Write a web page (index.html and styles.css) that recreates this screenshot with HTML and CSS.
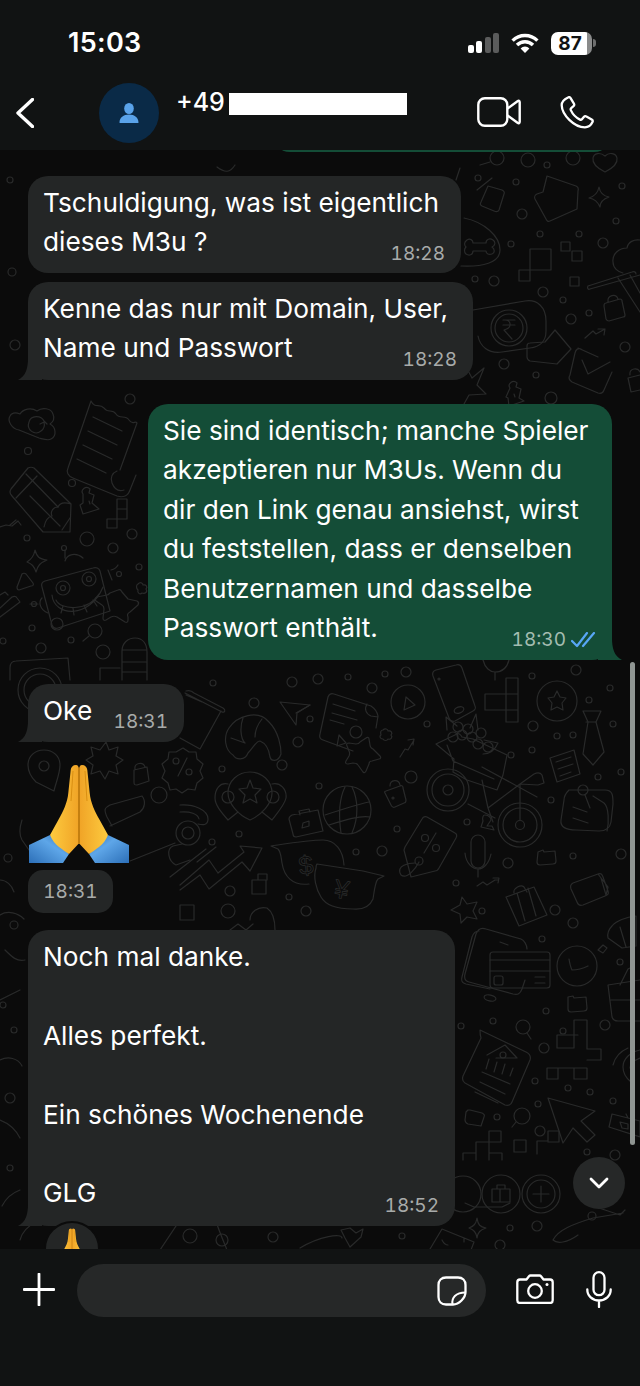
FILE: index.html
```html
<!DOCTYPE html>
<html lang="de">
<head>
  <meta charset="UTF-8">
  <title>WhatsApp Chat</title>
  <link rel="stylesheet" href="styles.css">
</head>
<body>
  <div class="phone">
    <header class="topbar">
      <div class="status">
        <span class="clock">15:03</span>
        <div class="status-icons">
          <div class="signal">
            <i class="bar b1"></i><i class="bar b2"></i><i class="bar b3"></i><i class="bar b4"></i>
          </div>
          <svg class="wifi" viewBox="0 0 28 20" width="28" height="20">
            <path d="M1.6 7.6a17.5 17.5 0 0 1 24.8 0M6 12a11.3 11.3 0 0 1 16 0" fill="none" stroke="#fff" stroke-width="3.4"/>
            <path d="M14 20l-4.4-4.6a6.2 6.2 0 0 1 8.8 0z" fill="#fff"/>
          </svg>
          <div class="battery"><span class="battery-level">87</span></div>
          <i class="battery-tip"></i>
        </div>
      </div>
      <div class="contact">
        <svg class="back" viewBox="0 0 18 30" width="18" height="30">
          <path d="M16.5 1.5L2 15l14.500 13.500" fill="none" stroke="#fff" stroke-width="3.400" stroke-linecap="round" stroke-linejoin="round"/>
        </svg>
        <div class="avatar">
          <svg viewBox="0 0 20 20" width="20" height="20">
            <ellipse cx="10" cy="5.500" rx="4.800" ry="5.500" fill="#5aa3ea"/>
            <path d="M0.500 19.500c0-5 4-8 9.500-8s9.500 3 9.500 8c0 .5-.3.5-.8.5H1.300c-.5 0-.8 0-.8-.5z" fill="#5aa3ea"/>
          </svg>
        </div>
        <div class="name"><span>+49</span><i class="redacted"></i></div>
        <svg class="video" viewBox="0 0 44 30" width="44" height="30">
          <rect x="1.300" y="1.300" width="29" height="27.400" rx="6.500" fill="none" stroke="#fff" stroke-width="2.400"/>
          <path d="M30.500 11.500l10-7.300c1.200-.8 2.200-.3 2.200 1v19.600c0 1.300-1 1.800-2.200 1l-10-7.300" fill="none" stroke="#fff" stroke-width="2.400" stroke-linejoin="round"/>
        </svg>
        <svg class="call" viewBox="0 0 34 33" width="34" height="33">
          <path d="M8 1.500c1-.6 2-.3 2.600.7l3.300 5.400c.5.900.4 1.900-.4 2.600l-2.300 2c-.6.500-.7 1.200-.4 1.900 1.900 4.200 4.900 7.400 9.200 9.500.7.300 1.400.2 1.900-.4l1.900-2.200c.7-.8 1.700-1 2.600-.5l5.300 3c1 .6 1.300 1.500.8 2.500-1.400 3-4.300 5.300-7.600 5.300C14 31.300 2 18.800 1.700 9.300 1.600 6 4.400 3.200 8 1.500z" fill="none" stroke="#fff" stroke-width="2.300" stroke-linejoin="round"/>
        </svg>
      </div>
    </header>

    <main class="chat">
      <svg class="wallpaper" viewBox="0 150 640 1100" width="640" height="1100" fill="none" stroke="#292a2a" stroke-width="1.200" stroke-linejoin="round" stroke-linecap="round">
        <defs>
          <symbol id="pray" viewBox="0 0 100 98">
            <g id="hand-left">
              <path d="M21 70L0 80v18h34l6-9z" fill="url(#sleeve)"/>
              <path d="M47 0c-3 0-5 2-5.300 5L39.300 28c-1 10-5 18-10 27l-8.300 15c2 5 5 9 9 12 4 3 7 5 10 7l10-10.700V5c0-3-1-5-3-5z" fill="url(#skin)"/>
              <path d="M44 6l-2 30" fill="none" stroke="#d98f12" stroke-width="1"/>
            </g>
            <use href="#hand-left" transform="translate(100 0) scale(-1 1)"/>
            <path d="M50 3v76" fill="none" stroke="#c47f10" stroke-width="2"/>
          </symbol>
          <linearGradient id="skin" x1="0" y1="0" x2="1" y2="0">
            <stop offset="0" stop-color="#fdcb3f"/><stop offset="1" stop-color="#f0a326"/>
          </linearGradient>
          <linearGradient id="sleeve" x1="0" y1="1" x2="1" y2="0">
            <stop offset="0" stop-color="#2c6fb8"/><stop offset=".6" stop-color="#5ea6e8"/><stop offset="1" stop-color="#2e70b8"/>
          </linearGradient>
        </defs>

        <!-- small dots -->
        <g>
          <circle cx="28" cy="451" r="3.500"/><circle cx="72" cy="483" r="3.500"/><circle cx="130" cy="399" r="5"/><circle cx="27" cy="538" r="3"/><circle cx="87" cy="539" r="7"/><circle cx="113" cy="548" r="5"/><circle cx="132" cy="534" r="5"/><circle cx="139" cy="567" r="3"/><circle cx="32" cy="628" r="3"/><circle cx="71" cy="640" r="3"/><circle cx="41" cy="648" r="5"/><circle cx="103" cy="652" r="7"/><circle cx="3" cy="641" r="3"/>
          <circle cx="213" cy="683" r="3"/><circle cx="292" cy="682" r="5"/><circle cx="318" cy="679" r="5"/><circle cx="348" cy="677" r="3"/><circle cx="372" cy="688" r="5"/><circle cx="385" cy="674" r="3"/><circle cx="406" cy="672" r="5"/><circle cx="254" cy="703" r="5"/><circle cx="310" cy="719" r="3"/><circle cx="298" cy="742" r="5"/><circle cx="282" cy="765" r="5"/><circle cx="222" cy="769" r="3"/><circle cx="319" cy="786" r="3"/><circle cx="411" cy="777" r="6"/><circle cx="427" cy="724" r="3"/><circle cx="533" cy="726" r="5"/><circle cx="557" cy="736" r="3"/><circle cx="573" cy="735" r="3"/><circle cx="532" cy="750" r="3"/><circle cx="511" cy="755" r="3"/><circle cx="598" cy="777" r="3"/><circle cx="621" cy="772" r="3"/><circle cx="610" cy="688" r="3"/><circle cx="613" cy="724" r="3"/><circle cx="589" cy="700" r="3"/><circle cx="576" cy="670" r="5"/><circle cx="532" cy="676" r="3"/><circle cx="551" cy="800" r="3"/><circle cx="467" cy="822" r="3"/><circle cx="397" cy="829" r="3"/><circle cx="239" cy="834" r="3"/><circle cx="212" cy="842" r="3"/><circle cx="356" cy="852" r="3"/><circle cx="382" cy="851" r="5"/><circle cx="508" cy="863" r="5"/><circle cx="573" cy="856" r="3"/><circle cx="621" cy="854" r="5"/><circle cx="456" cy="883" r="3"/><circle cx="230" cy="891" r="5"/><circle cx="289" cy="897" r="3"/><circle cx="228" cy="911" r="7"/><circle cx="306" cy="911" r="5"/><circle cx="482" cy="911" r="3"/><circle cx="555" cy="910" r="5"/><circle cx="573" cy="923" r="5"/>
          <circle cx="478" cy="178" r="3"/><circle cx="516" cy="182" r="3"/><circle cx="528" cy="160" r="7"/><circle cx="547" cy="165" r="3"/><circle cx="573" cy="158" r="7"/><circle cx="622" cy="186" r="3"/><circle cx="616" cy="221" r="3"/><circle cx="522" cy="214" r="5"/><circle cx="540" cy="234" r="3"/><circle cx="579" cy="234" r="3"/><circle cx="511" cy="244" r="3"/><circle cx="603" cy="243" r="5"/><circle cx="475" cy="279" r="3"/><circle cx="494" cy="281" r="5"/><circle cx="543" cy="292" r="5"/><circle cx="563" cy="300" r="3"/><circle cx="589" cy="313" r="3"/><circle cx="571" cy="319" r="5"/><circle cx="625" cy="347" r="5"/><circle cx="504" cy="364" r="5"/><circle cx="536" cy="375" r="3"/><circle cx="551" cy="398" r="6"/>
          <circle cx="542" cy="939" r="3"/><circle cx="620" cy="962" r="3"/><circle cx="546" cy="1011" r="3"/><circle cx="605" cy="1025" r="5"/><circle cx="493" cy="1021" r="3"/><circle cx="461" cy="1026" r="3"/><circle cx="563" cy="1031" r="3"/><circle cx="544" cy="1048" r="5"/><circle cx="503" cy="1055" r="3"/><circle cx="535" cy="1081" r="3"/><circle cx="568" cy="1088" r="3"/><circle cx="590" cy="1092" r="3"/><circle cx="538" cy="1104" r="3"/><circle cx="613" cy="1101" r="3"/><circle cx="497" cy="1117" r="3"/><circle cx="540" cy="1131" r="5"/><circle cx="587" cy="1152" r="3"/><circle cx="615" cy="1155" r="5"/>
          <circle cx="190" cy="1236" r="7"/><circle cx="222" cy="1240" r="6"/><circle cx="273" cy="1237" r="5"/><circle cx="402" cy="1236" r="3"/><circle cx="510" cy="1228" r="3"/><circle cx="537" cy="1226" r="5"/><circle cx="10" cy="1168" r="3"/><circle cx="3" cy="1005" r="3"/><circle cx="14" cy="925" r="4"/>
          <circle cx="12" cy="272" r="4"/><circle cx="10" cy="180" r="3"/><circle cx="15" cy="345" r="5"/>
        </g>

        <!-- top strip -->
        <path d="M605 172c-6-3-13-8-12-14 1-5 7-6 12-2 4-4 11-3 12 2 1 6-6 11-12 14z"/>
        <circle cx="497" cy="158" r="7"/><path d="M490 162l-10 3"/>
        <path d="M460 168l-4 12M235 165c-5 8-10 8-18 2"/>
        <!-- mitten, star, bone bag, tag -->
        <path d="M547 176l29 10c2 1 3 2 2 5l-1 18-27 12c-2 1-3 0-4-2l-11-20c-1-2 0-4 2-5l6-2z"/>
        <path d="M599 187c1 6 4 9 10 10-6 2-9 5-9 10-2-5-5-8-11-9 6-2 9-5 10-11z"/>
        <path d="M477 190l15-12M464 218c20 4 36 18 36 32 0 13-18 17-39 16"/>
        <path d="M467 240c3-2 6 0 6 3h13c0-4 4-5 7-3 3 2 2 6-1 7 3 2 3 6 0 7-3 1-6 0-6-3h-13c0 4-4 5-7 3-2-2-2-5 0-7-2-2-2-5 1-7z"/>
        <path d="M488 186l14 4c2 1 3 2 2 4l-5 16c-1 2-3 2-5 1l-12-5c-2-1-2-2-1-4z"/>
        <!-- squares -->
        <rect x="530" y="249" width="21" height="21"/><rect x="519" y="270" width="11" height="11"/><rect x="561" y="242" width="9" height="9"/><rect x="572" y="251" width="10" height="10"/><rect x="570" y="277" width="9" height="9"/>
        <!-- rupee note -->
        <path d="M473 310l52-9c12-2 21 6 21 20v10c0 10-6 16-16 17l-28 4c-14 2-22-6-24-16"/>
        <circle cx="509" cy="328" r="18"/><circle cx="509" cy="328" r="14"/>
        <path d="M503 320h12M503 325h12M505 320c6 0 8 8-1 10l8 9"/>
        <path d="M555 330l16 19-14 15-27-3c-2-1-3-2-3-4v-11c0-2 1-3 3-3l15-1z"/>
        <path d="M585 338l8-7 3 3 9-5M598 329l7 0-1 6"/>
        <path d="M578 348l20 9M610 362l-22 12-6-14M570 375l5-22c1-4 3-5 6-4M570 375c-2 3-1 5 2 7l26 11c3 1 5 0 6-3l8-18"/>
        <!-- ice cream, locks -->
        <path d="M640 240c-6-1-12 2-13 8-8 0-15 6-14 14 0 6 5 10 10 11"/>
        <path d="M588 286l44-14c2-1 4 0 4 2M590 289c-2 1-3-1-2-3M590 289l50-14M618 278l22 34M630 275l10 18"/>
        <path d="M606 303l14-4c1 0 2 1 2 2l3 14c0 1 0 2-2 2l-14 4c-1 0-2 0-3-2l-2-13c0-2 0-3 2-3zM608 302c-1-7 8-9 10-3"/>
        <path d="M630 375c-1-7 8-8 10-3M628 378l12-3M628 378l3 14 9-2"/>
        <path d="M510 388c-3-4 3-9 7-5l-1 4 5 2-2 9 5 3-15 5-1-8-2-1zM514 394l1 3"/>
        <path d="M484 368l-12 10-7-13-5 11M484 368l-7 17 9 9-17 1-5 9"/>

        <!-- cloud -->
        <path d="M20 414c3-5 11-7 17-3 5-4 14-3 16 3 2 5 0 8-3 10 6 3 7 12 1 15-3 2-8 0-12-1l-20-8c-7-1-12-9-9-14 1-3 5-4 10-2z"/>
        <path d="M44 421c-3-6-13-6-15 1-3 8 6 14 12 9 3-2 4-5 3-9l-4 2M44 421l3 3"/>
        <!-- receipt -->
        <path d="M91 401l-23 67c-2 4 0 8 5 10l44 18c6 2 11 0 13-6l6-15M91 401c4 8 8 2 13 7 4 6 8 0 12 6s9 0 13 6 6 0 8 3l-17 47M117 471c-5 2-7 7-5 12 2 5 6 9 12 7"/>
        <path d="M93 417l29 14M88 431l29 14M83 445l29 14M77 459l29 14"/>
        <!-- pencil -->
        <path d="M11 489c-2 3-1 5 1 7l31 36h27l1-28-37-36c-2-1-4-1-6 0zM71 504c-6-2-11-2-13 3-5 0-8 5-6 9-5 1-7 6-8 11"/>
        <path d="M37 476l-21 22M58 507l-32-33M30 496l30 30M62 530l8-12"/>
        <path d="M83 494c-3-4 3-9 7-5l-1 4 5 2-2 8 7 6-16 5-3-9 3-2zM89 501l1 3"/>
        <path d="M117 499h10v10h-10zM117 509h10v10h-10zM107 519h10v9h-10z"/>
        <path d="M35 550c2 7 4 9 12 10-7 3-9 5-11 12-2-6-4-8-9-10 5-3 7-6 8-12z"/>
        <path d="M26 574l7 9c1 2 0 3-2 3l-12 4c-2 0-2-1-2-3l5-13c1-1 3-1 4 0z"/>
        <path d="M0 527l6-2 6 1 6-5 3 4M10 525l6-5"/>
        <!-- robot -->
        <path d="M45 581l48-13c3-1 6 0 7 3l10 40-52 17c-3 1-5 0-6-3l-10-38c-1-3 0-5 3-6z"/>
        <circle cx="63" cy="588" r="7"/><circle cx="63" cy="588" r="2.500"/><circle cx="89" cy="579" r="7"/><circle cx="89" cy="579" r="2.500"/>
        <path d="M52 595c2 22 38 24 51-8M56 600c4 10 32 12 43-6M63 606l-2 7M73 608l1 7M84 605l3 7M93 600l4 6"/>
        <path d="M65 561c2-7 11-9 18-3M65 550v8M42 598c-4 4-2 12 6 15M30 604h8M108 570l4 10M111 570c4-1 6-3 7-5"/>
        <circle cx="64" cy="548" r="2.500"/><circle cx="119" cy="574" r="2.500"/><circle cx="34" cy="604" r="2.500"/><circle cx="57" cy="624" r="6"/>
        <path d="M118 590c2-1 3 0 4 2l6 7 9 2c2 1 2 2 1 4l-8 7c-2 1-3 3-2 5l0 3c0 2-1 3-3 2l-8-5c-2-1-4-1-6 0l-5 3c-2 1-3 0-3-2l1-9c0-2 0-3-2-4l-6-4c-2-2-1-3 1-4l10-2c1 0 2-1 3-2z"/>
        <path d="M138 584c3-3 5 0 5 1 3-1 5 2 3 4 2 3-1 5-4 4-2 2-5 0-4-3-2-2-2-5 0-6z"/>
        <circle cx="95" cy="631" r="7"/><path d="M89 636l-6 5"/>
        <path d="M0 608l12-11c2-1 4-1 5 1l3 4-20 15M0 595l5-3 3 3"/>
        <!-- camera left, glove -->
        <path d="M10 680v-12c0-4 2-7 6-7l52-3 2 22"/><circle cx="40" cy="690" r="22"/><circle cx="40" cy="690" r="16"/>
        <path d="M122 680v-29c0-8 6-13 13-13 8 0 12 6 12 14v28M122 650h24M122 662h24M122 672h24M100 680v-12h20"/>

        <!-- cup croissant plane -->
        <path d="M186 695l16 7M180 738l20 11 21-38M186 691c3-1 6 0 8 2l29 15c3 2 2 5-1 4l-37-19"/>
        <path d="M229 728c8-12 29-19 40-6 10 10 12 25 12 32-3 9-10 7-11 3-1-8-5-14-10-16-4 0-6 6-12 12-3 8-12 7-15 2-8-5-10-18-4-27zM243 718c-3 8-3 20 2 25M262 719c-4 5-7 10-7 18M231 738l14 5"/>
        <path d="M280 702l30 3-13 8-1 12z"/><path d="M296 713l14-8"/>
        <!-- doc -->
        <path d="M334 694l37 12c3 2 6 5 7 10l-2 12M334 694c-3-1-5 0-6 3l-8 37c-1 3 0 5 3 6l30 11M367 704c-3 5-1 10 4 12l7 1M333 704l22 7M332 713l25 7M330 720l14 4"/>
        <circle cx="356" cy="732" r="6"/><path d="M339 735l-2 11 9-3z"/>
        <path d="M366 738c1-1 3-1 3 1l1 6c0 2 1 3 3 4l7 7c1 1 1 3-1 3l-7 2c-2 0-3 1-3 3l-3 7c-1 2-2 2-3 1l-5-7c-1-2-3-2-5-2l-5 1c-2 0-3-1-2-3l3-5c1-2 1-3 0-5l-2-5c-1-2 0-3 2-3l7 1c2 0 3 0 4-2z"/>
        <path d="M383 730c2-2 5-1 5 1 3-1 5 2 3 4 2 2 0 5-3 4-1 2-4 2-5 0-3 0-4-3-2-4-1-3 0-5 2-5z"/>
        <path d="M400 757l5-8 3 1 6-10M408 740l6-1-1 6"/>
        <circle cx="408" cy="702" r="17"/><path d="M406 697l-2 13 11-5z"/>
        <path d="M436 670l20-5c3-1 5 0 6 3l13 38c1 2 0 4-2 5l-18 10c-3 1-5 0-6-3l-16-42c-1-3 0-5 3-6z"/><ellipse cx="459" cy="710" rx="5" ry="3" transform="rotate(-20 459 710)"/>
        <circle cx="439" cy="679" r="1"/>
        <path d="M506 678h12v16h-12zM485 694h33v16h-33zM506 694v16M506 710h12v12h-12z"/>
        <circle cx="557" cy="701" r="20"/><path d="M557 691l3 6 6 1-4 5 1 7-6-3-6 3 1-7-4-5 6-1z"/>
        <path d="M583 711h18l-5 11 8 30-11 13-10-11 5-32z"/><path d="M586 722h10"/>
        <path d="M550 758l24-8 6 24-23 8zM556 762l15-5M558 769l15-5M560 776l11-4"/>
        <!-- mic top -->
        <path d="M483 660c2 8 7 12 12 12 7 0 12-4 14-12M495 672v8"/>
        <!-- bike -->
        <circle cx="448" cy="790" r="21"/><circle cx="448" cy="790" r="16"/><circle cx="448" cy="790" r="5"/>
        <circle cx="520" cy="825" r="22"/><circle cx="520" cy="825" r="17"/><circle cx="520" cy="825" r="4.500"/>
        <path d="M520 820v-36l-32 24-6-28M482 767l55 30M468 804l27 14M488 808l5 14M520 784l14-10c2-1 6-2 8 1l2 8-6 2-18-1"/>
        <path d="M485 815c4 0 6 3 6 5l-4 6h5l2 4-13-3 2-6c-1-3 0-6 2-6z"/>
        <path d="M436 744l21-10c2-1 4 1 5 3l11 2 34 16-4 20-6 15-30-10-14-8 1-13zM447 745l6 16 41 18"/>
        <circle cx="453" cy="737" r="5"/><circle cx="462" cy="735" r="5"/><circle cx="472" cy="737" r="5"/><circle cx="458" cy="727" r="5"/><circle cx="468" cy="729" r="5"/><circle cx="478" cy="744" r="5"/><circle cx="488" cy="747" r="5"/><circle cx="481" cy="733" r="5"/>
        <path d="M447 730l-1-13 11 9M470 728l6-14 2 16M484 740l14 3c-3 7-8 11-15 11"/>
        <!-- pin group -->
        <path d="M250 772c12 0 22 9 22 21 0 10-10 22-22 27-12-5-22-17-22-27 0-12 10-21 22-21z"/>
        <path d="M250 780l3 8 8 1-6 6 2 8-7-4-7 4 2-8-6-6 8-1z"/>
        <path d="M272 784c8-2 15 5 14 14-1 6-7 13-14 22l-10-8M228 784c-8-2-13 5-13 14 0 7 6 14 13 22l10-8"/><circle cx="273" cy="797" r="6"/><circle cx="228" cy="797" r="6"/>
        <!-- kettle -->
        <circle cx="188" cy="833" r="12"/><circle cx="188" cy="833" r="6"/><path d="M180 805c14-1 28 5 28 14 0 7-6 6-10 5M180 812c10-1 18 2 19 7"/>
        <path d="M292 815l26-5 5 21-27 6c-2 0-3-1-3-3l-4-15c0-2 1-3 3-4zM300 815l-1-4 10-2 1 3M303 823l-1 5 7-2 0-5z"/>
        <circle cx="347" cy="810" r="24"/><path d="M325 815c15-5 30-10 44-13M329 825c16-5 32-10 41-8M345 787c-5 10-7 25-4 46M352 787c6 12 7 30 0 46"/>
        <path d="M390 786c0-7 9-7 10-1M386 791l14-5c2-1 3 0 3 2l3 12c0 2 0 3-2 3l-9 4c-2 1-3 0-4-2l-6-12c-1-1 0-2 1-2z"/><circle cx="393" cy="798" r="1"/>
        <!-- tag -->
        <path d="M427 817l28 16c2 1 2 3 1 5l-17 30c-1 2-2 3-4 3l-24 6-7-27 1-3 17-28c1-2 3-3 5-2z"/>
        <circle cx="419" cy="861" r="4"/><path d="M415 863c-5 0-20 2-14 12 6 5 15-7 18-13"/>
        <path d="M424 853l12-20"/><circle cx="425" cy="838" r="3.500"/><circle cx="436" cy="848" r="3.500"/>
        <rect x="471" y="835" width="14" height="33" rx="7"/><path d="M465 853c1 11 8 16 13 16s11-5 13-15M478 869v8"/>
        <path d="M477 886l6-4 4 3 8-5 3 0M493 878l6 0-1 5"/>
        <!-- bottle note -->
        <path d="M569 790l36 0c8 0 8 6 8 14l-2 18c-1 6-5 9-12 9l-23-1c-10 0-16-3-15-10l3-20c0-3 2-7 5-10z"/>
        <path d="M593 796l11 7c5 4 5 20 3 28M573 807l14 5M573 818l15 5"/><circle cx="583" cy="790" r="5"/><path d="M585 795l5 13"/>
        <!-- chart and bags -->
        <path d="M180 890l20-15 9 14 33-27 8 9 12-23-22-2 4 6-26 21-9-13-29 25"/>
        <path d="M271 846c20-3 38-6 52-6 12 0 20 10 21 25M271 846l7 3c3 3 3 8 4 14 2 13 10 23 27 21"/>
        <path d="M322 866l46 7 21 5-6 3c-3 3-4 14-5 20-3 7-9 11-20 10-13 0-27-3-32-12-5-8-8-20-5-29 0-2 0-3 1-4z" transform="translate(-5 -2)"/>
        <text x="300" y="875" class="doodle-sign" transform="rotate(-8 300 875)">$</text>
        <text x="333" y="897" class="doodle-sign" transform="rotate(10 333 897)">¥</text>
        <!-- lower row -->
        <path d="M180 905h14v15h-14zM252 880h14v14h-14zM258 880v-6h9v6"/>
        <path d="M506 897l28-10 13 28-28 11zM514 893c-1-5 7-9 10-6l3 5M517 893l8 28M528 888l8 28"/>
        <path d="M573 883l25-9c3-1 4 0 5 3l5 14c1 3 0 4-3 5l-22 9c-3 1-5 0-6-3l-6-13c-1-3 0-5 2-6zM598 874l10 13-2 8-5-17"/>
        <path d="M462 897l5 7 10-2-4 9 4 8-10-2-6 6-1-9-9-4 9-5z"/>
        <path d="M538 852l5-2 1 2 11-1 1 10c0 2-1 3-3 3l-13 1c-2 0-3-1-3-3z"/>
        <path d="M250 920c0-8 8-14 17-12 6 4 8 12 8 22M230 930l8-6 8 6 7-6"/>
        <!-- pin and badge near the emoji -->
        <path d="M44 750c9 0 16 6 16 15 0 9-5 20-6 26l-18-9c-5-5-8-11-8-17 0-9 7-15 16-15z"/><circle cx="44" cy="766" r="5"/>
        <path d="M106 742l3 8 9-3-2 9 7 4-7 5 2 9-9-3-4 8-5-8-9 3 2-9-7-5 7-4-2-9 9 3z"/>
        <path d="M135 769c-1-6 8-8 10-2M134 770l13-3 2 14-12 4c-2 0-3 0-3-3z"/>
        <path d="M183 748l6 4 7 0 1 7 6 5-3 7 3 7-6 5-2 7-7-1-6 4-6-4-6 1-2-7-6-5 3-7-3-7 6-5 1-7 7 0z"/>
        <path d="M178 776l9-18"/><circle cx="176" cy="761" r="3"/><circle cx="189" cy="772" r="3"/>
        <circle cx="159" cy="795" r="8"/>
        <path d="M142 796l-32 9c-6 3-6 5-3 12l5 9M142 796c4 5 3 12-2 16l-30 14M175 843l-45 18M190 860l-14 5c-8-4-10-16-3-19l9-2"/>
        <path d="M170 877l36-28M197 862l19-15M22 820c-2 6-4 13 0 20l7 10"/>
        <path d="M0 880c6 0 12 5 14 12M0 915c8-5 18-2 24 4M5 950c7 7 12 12 20 10M0 1000l20-10M0 1060c8-4 18-2 22 6M0 1120c8 3 15 8 20 18M20 1190c-8 3-14 8-18 16"/>
        <circle cx="8" cy="858" r="4"/><circle cx="10" cy="1098" r="5"/><circle cx="14" cy="1030" r="3"/>
        <!-- card and phone -->
        <path d="M486 929l35 10c3 1 6 6 6 10M486 929c-5-2-8 0-10 5l-11 40c-1 4 0 7 4 8l44 12c5 1 7 0 9-5l3-9M479 931c-4 0-6 3-7 6l-10 40c-1 4 0 6 4 7l24 5"/>
        <rect x="490" y="952" width="60" height="36" rx="3"/><path d="M490 960h60M490 971h60M535 977h10M535 983h10"/><rect x="494" y="976" width="9" height="9" rx="2"/>
        <ellipse cx="490" cy="998" rx="6" ry="3" transform="rotate(12 490 998)"/><path d="M500 942l8 3"/>
        <circle cx="577" cy="966" r="20"/><path d="M569 959c1 6 2 9 3 11 4 0 10-1 16-4"/>
        <path d="M568 997l5-1 1 2 12-1 1 11c0 2-1 3-3 3l-13 1c-2 0-3-1-3-3z"/>
        <circle cx="523" cy="1027" r="7"/><path d="M527 1033l4 6"/>
        <!-- bank doc -->
        <path d="M480 1030l46 22c4 2 5 5 4 8l-18 42c-1 3-4 4-7 3l-40-22c-3-2-3-4-2-7l18-38c-1-3-1-5-1-8z"/>
        <path d="M487 1055l18-10 12 13-21 0M489 1059l-3 10M497 1062l-3 10M505 1064l-3 10M513 1068l-3 8M482 1072l28 12M480 1082l25 12M475 1092l23 11"/>
        <path d="M578 1035h-21v13h17v-28h13v29h14v11h-14M547 1068h11v11h-11zM558 1068h29v11h-13v-11"/>
        <path d="M548 1098l47 13-14 10 14 14-8 7-14-14-10 15z"/>
        <path d="M470 1110l12 3c2 1 3 2 2 4l-3 9-13-2c-2-1-3-2-3-4l1-8 2-2z"/>
        <circle cx="522" cy="1116" r="8"/><path d="M516 1122l-4 5"/>
        <rect x="514" y="1140" width="12" height="12"/><path d="M537 1154v-13h11v-10h11v11h-11M463 1160v-7h13v-11h13v-11h12v11h-12v11h13v7M489 1142v18M476 1153v7"/>
        <path d="M612 926c4-5 14-9 24-10v30l-14 2-14-10c-1-5 1-9 4-12zM603 945l4 3-4 5-5-3zM620 927l6 20"/>
        <path d="M608 985l32-5M608 985l4 32c1 3 3 4 6 4h22M611 1000h29M620 985l8-16 6-3"/>
        <path d="M640 1050c-10 2-17 9-17 17 0 6 3 11 8 15M640 1058c-5 2-10 5-10 10M613 1065c2-8 8-14 15-17"/>
        <path d="M612 1114l28 7v16l-31-10zM628 1118l-2-4M620 1122l2 6 6 1 0-5z"/>
        <!-- above composer -->
        <circle cx="463" cy="1194" r="18"/><circle cx="501" cy="1194" r="19"/><circle cx="541" cy="1194" r="19"/><circle cx="541" cy="1194" r="14"/>
        <path d="M492 1189h18v13h-18zM497 1189v-4h8v4M500 1189v13M541 1186v16M533 1194h16"/>
        <path d="M465 1203l9 4h28l8-4"/>
        <path d="M477 1218c1 7 3 9 9 10-6 2-8 4-9 10-1-6-3-8-8-10 5-2 7-4 8-10z"/>
        <path d="M553 1240c5-10 20-16 40-22M590 1205l30 10 5-5M593 1218l30-5M553 1240c4 4 14 3 25-5"/><circle cx="592" cy="1216" r="4"/>
        <path d="M350 1228l6 5 7-4-2 8-11 10-5-9-4-8zM300 1248c20-12 42-15 42-10M215 1218c2 8 8 22 12 32M160 1250l20-30"/>
        <path d="M20 1240c2-8 8-14 16-18"/>
        <path d="M430 1249l12-20 32 13-3 8M442 1240c2 4 4 5 6 5M464 1238v4"/>
        <circle cx="500" cy="1245" r="5"/>
      </svg>

      <div class="prev-bubble"></div>

      <div class="bubble in first">
        <p>Tschuldigung, was ist eigentlich<br>dieses M3u ?</p>
        <span class="time">18:28</span>
      </div>
      <div class="bubble in tail second">
        <p>Kenne das nur mit Domain, User,<br>Name und Passwort</p>
        <span class="time">18:28</span>
      </div>
      <div class="bubble out tail outgoing">
        <p>Sie sind identisch; manche Spieler<br>akzeptieren nur M3Us. Wenn du<br>dir den Link genau ansiehst, wirst<br>du feststellen, dass er denselben<br>Benutzernamen und dasselbe<br>Passwort enthält.</p>
        <span class="time">18:30
          <svg class="ticks" viewBox="0 0 26 16" width="26" height="16">
            <path d="M1 9l5 5L16 1M12 14L23 1" fill="none" stroke="#58a6f5" stroke-width="2.200" stroke-linecap="round" stroke-linejoin="round"/>
          </svg>
        </span>
      </div>
      <div class="bubble in tail oke">
        <p>Oke</p>
        <span class="time">18:31</span>
      </div>
      <svg class="emoji" width="100" height="98"><use href="#pray"/></svg>
      <div class="time-pill">18:31</div>
      <div class="bubble in tail thanks">
        <p>Noch mal danke.<br><br>Alles perfekt.<br><br>Ein schönes Wochenende<br><br>GLG</p>
        <span class="time">18:52</span>
        <div class="reaction">
          <svg width="38" height="38"><use href="#pray"/></svg>
        </div>
      </div>

      <div class="scrollbar"></div>
      <div class="scroll-down">
        <svg viewBox="0 0 20 12" width="20" height="12">
          <path d="M2 2l8 8 8-8" fill="none" stroke="#fff" stroke-width="2.800" stroke-linecap="round" stroke-linejoin="round"/>
        </svg>
      </div>
    </main>

    <footer class="composer">
      <svg class="plus" viewBox="0 0 32 33" width="32" height="33">
        <path d="M16 1v31M1 16.500h30" stroke="#fff" stroke-width="2.800" stroke-linecap="round"/>
      </svg>
      <div class="input">
        <svg viewBox="0 0 30 30" width="30" height="30">
          <path d="M16 28.500H9c-4.500 0-7.500-3-7.500-7.500V9c0-4.500 3-7.500 7.500-7.500h12c4.500 0 7.500 3 7.500 7.500v7C28.500 22 22 28.500 16 28.500z" fill="none" stroke="#fff" stroke-width="2.300"/>
          <path d="M15.500 28c-1-6 3-11.500 13-11.500" fill="none" stroke="#fff" stroke-width="2"/>
        </svg>
      </div>
      <svg class="camera" viewBox="0 0 38 30" width="38" height="30">
        <path d="M4 5.500h6.500l2.500-3.300c.4-.5.800-.7 1.500-.7h9c.7 0 1.100.2 1.500.7l2.500 3.300H34c1.500 0 2.700 1.200 2.700 2.700v18.100c0 1.500-1.200 2.700-2.700 2.700H4c-1.500 0-2.700-1.200-2.700-2.700V8.200c0-1.500 1.200-2.700 2.700-2.700z" fill="none" stroke="#fff" stroke-width="2.300" stroke-linejoin="round"/>
        <circle cx="19" cy="17" r="6.800" fill="none" stroke="#fff" stroke-width="2.300"/>
        <circle cx="31" cy="10.500" r="1.500" fill="#fff"/>
      </svg>
      <svg class="mic" viewBox="0 0 26 37" width="26" height="37">
        <rect x="7.500" y="1.200" width="11" height="23" rx="5.500" fill="none" stroke="#fff" stroke-width="2.300"/>
        <path d="M1.300 18.500c0 6.500 5 11 11.700 11s11.700-4.500 11.700-11M13 29.500V36" fill="none" stroke="#fff" stroke-width="2.300" stroke-linecap="round"/>
      </svg>
    </footer>
  </div>
</body>
</html>
```

FILE: styles.css
```css
* {
  box-sizing: border-box;
}
body {
  margin: 0;
  background: #0b0b0b;
  font-family: Inter, "Noto Sans", sans-serif;
  color: #fff;
}
p {
  margin: 0;
}
.phone {
  width: 640px;
  height: 1386px;
  display: flex;
  flex-direction: column;
  overflow: hidden;
}

/* header */
.topbar {
  height: 150px;
  flex: none;
  background: #111313;
  position: relative;
  z-index: 2;
}
.status {
  height: 83px;
  padding: 27px 44px 0 68px;
  display: flex;
  justify-content: space-between;
  align-items: flex-start;
}
.clock {
  font-size: 27px;
  font-weight: 600;
  line-height: 31px;
  letter-spacing: 0.3px;
}
.status-icons {
  display: flex;
  align-items: center;
  height: 26px;
  margin-top: 3px;
}
.signal {
  display: flex;
  align-items: flex-end;
  gap: 2.500px;
  height: 20px;
  margin-right: 12px;
}
.bar {
  width: 6px;
  background: #fff;
  border-radius: 2px;
}
.b1 { height: 8px; }
.b2 { height: 12px; }
.b3 { height: 16px; background: #5b5c5c; }
.b4 { height: 20px; background: #5b5c5c; }
.wifi {
  margin-right: 12px;
}
.battery {
  width: 41px;
  height: 23px;
  border-radius: 7px;
  background: linear-gradient(90deg, #fff 87%, #8a8b8b 87%);
  display: flex;
  align-items: center;
  justify-content: center;
}
.battery-level {
  font-size: 19px;
  font-weight: 700;
  color: #111313;
  margin-right: 3px;
}
.battery-tip {
  width: 3px;
  height: 8px;
  margin-left: 1px;
  background: #6d6e6e;
  border-radius: 0 3px 3px 0;
}
.contact {
  height: 67px;
  display: flex;
  align-items: flex-start;
  padding-left: 16px;
}
.back {
  margin-top: 15px;
}
.avatar {
  width: 60px;
  height: 60px;
  margin-left: 65px;
  border-radius: 50%;
  background: #0a2a47;
  display: flex;
  align-items: center;
  justify-content: center;
}
.name {
  display: flex;
  align-items: flex-start;
  width: 231px;
  margin-left: 17px;
  margin-top: 3px;
  font-size: 25px;
  font-weight: 500;
  line-height: 32px;
}
.redacted {
  width: 179px;
  height: 22px;
  margin-left: 4px;
  margin-top: 7px;
  background: #fff;
}
.video {
  margin-left: 70px;
  margin-top: 14px;
}
.call {
  margin-left: 39px;
  margin-top: 13px;
}

/* chat */
.chat {
  height: 1099px;
  flex: none;
  position: relative;
  overflow: hidden;
  background: #0b0b0b;
  display: flex;
  flex-direction: column;
  align-items: flex-start;
  padding-left: 28px;
}
.wallpaper {
  position: absolute;
  top: 0;
  left: 0;
}
.doodle-sign {
  font: 26px "Liberation Sans", sans-serif;
  stroke-width: 0.8;
  fill: none;
}
.prev-bubble {
  width: 340px;
  height: 30px;
  margin: -28px 28px 0 auto;
  background: #144d37;
  border-radius: 0 0 18px 18px;
  position: relative;
}
.bubble {
  position: relative;
  display: grid;
  padding: 7px 16px 12px 15px;
  border-radius: 20px;
  font-size: 26.250px;
  line-height: 39.400px;
}
.bubble > p,
.bubble > .time {
  grid-area: 1 / 1;
}
.in {
  background: #242626;
}
.out {
  background: #144d37;
  align-self: flex-end;
  margin-right: 28px;
  padding-right: 15px;
}
.time {
  justify-self: end;
  align-self: end;
  display: flex;
  align-items: center;
  gap: 5px;
  margin-bottom: -3px;
  font-size: 19px;
  line-height: 22px;
  font-variant-numeric: tabular-nums;
  color: #a8abaa;
}
.out .time {
  color: #a3bcb0;
}
.ticks {
  margin-top: -1px;
}
.tail::after {
  content: "";
  position: absolute;
  bottom: 0;
  left: -10px;
  width: 24px;
  height: 22px;
  background: #242626;
  clip-path: path("M10 0C10 10 8 18 0 22H24V0Z");
}
.out.tail::after {
  left: auto;
  right: -10px;
  background: #144d37;
  clip-path: path("M14 0C14 10 16 18 24 22H0V0Z");
}
.first {
  width: 433px;
  height: 97px;
  margin-top: 24px;
}
.second {
  width: 445px;
  height: 98px;
  margin-top: 9px;
}
.outgoing {
  width: 464px;
  height: 256px;
  margin-top: 24px;
}
.oke {
  width: 156px;
  height: 58px;
  margin-top: 24px;
}
.emoji {
  position: relative;
  margin: 23px 0 0 1px;
  flex: none;
}
.time-pill {
  position: relative;
  width: 85px;
  height: 43px;
  margin-top: 7px;
  border-radius: 15px;
  background: #242626;
  color: #a8abaa;
  font-size: 19px;
  line-height: 43px;
  font-variant-numeric: tabular-nums;
  text-align: center;
}
.thanks {
  width: 427px;
  height: 296px;
  margin-top: 17px;
}
.reaction {
  position: absolute;
  left: 16px;
  top: 100%;
  margin-top: -5px;
  width: 56px;
  height: 56px;
  border-radius: 50%;
  background: #242626;
  border: 2px solid #0b0b0b;
  display: flex;
  justify-content: center;
  padding-top: 5px;
}
.scrollbar {
  position: absolute;
  left: 630px;
  top: 512px;
  width: 5px;
  height: 483px;
  border-radius: 3px;
  background: #8f9592;
}
.scroll-down {
  position: absolute;
  left: 573px;
  top: 1007px;
  width: 52px;
  height: 52px;
  border-radius: 50%;
  background: #262828;
  display: flex;
  align-items: center;
  justify-content: center;
}

/* composer */
.composer {
  flex: 1;
  background: #111313;
  display: flex;
  align-items: flex-start;
  padding: 15px 0 0 23px;
  position: relative;
}
.plus {
  margin-top: 9px;
}
.input {
  width: 409px;
  height: 53px;
  margin-left: 22px;
  border-radius: 27px;
  background: #262828;
  display: flex;
  justify-content: flex-end;
  align-items: center;
  padding-right: 19px;
}
.camera {
  margin-left: 30px;
  margin-top: 10px;
}
.mic {
  margin-left: 32px;
  margin-top: 7px;
}
```
